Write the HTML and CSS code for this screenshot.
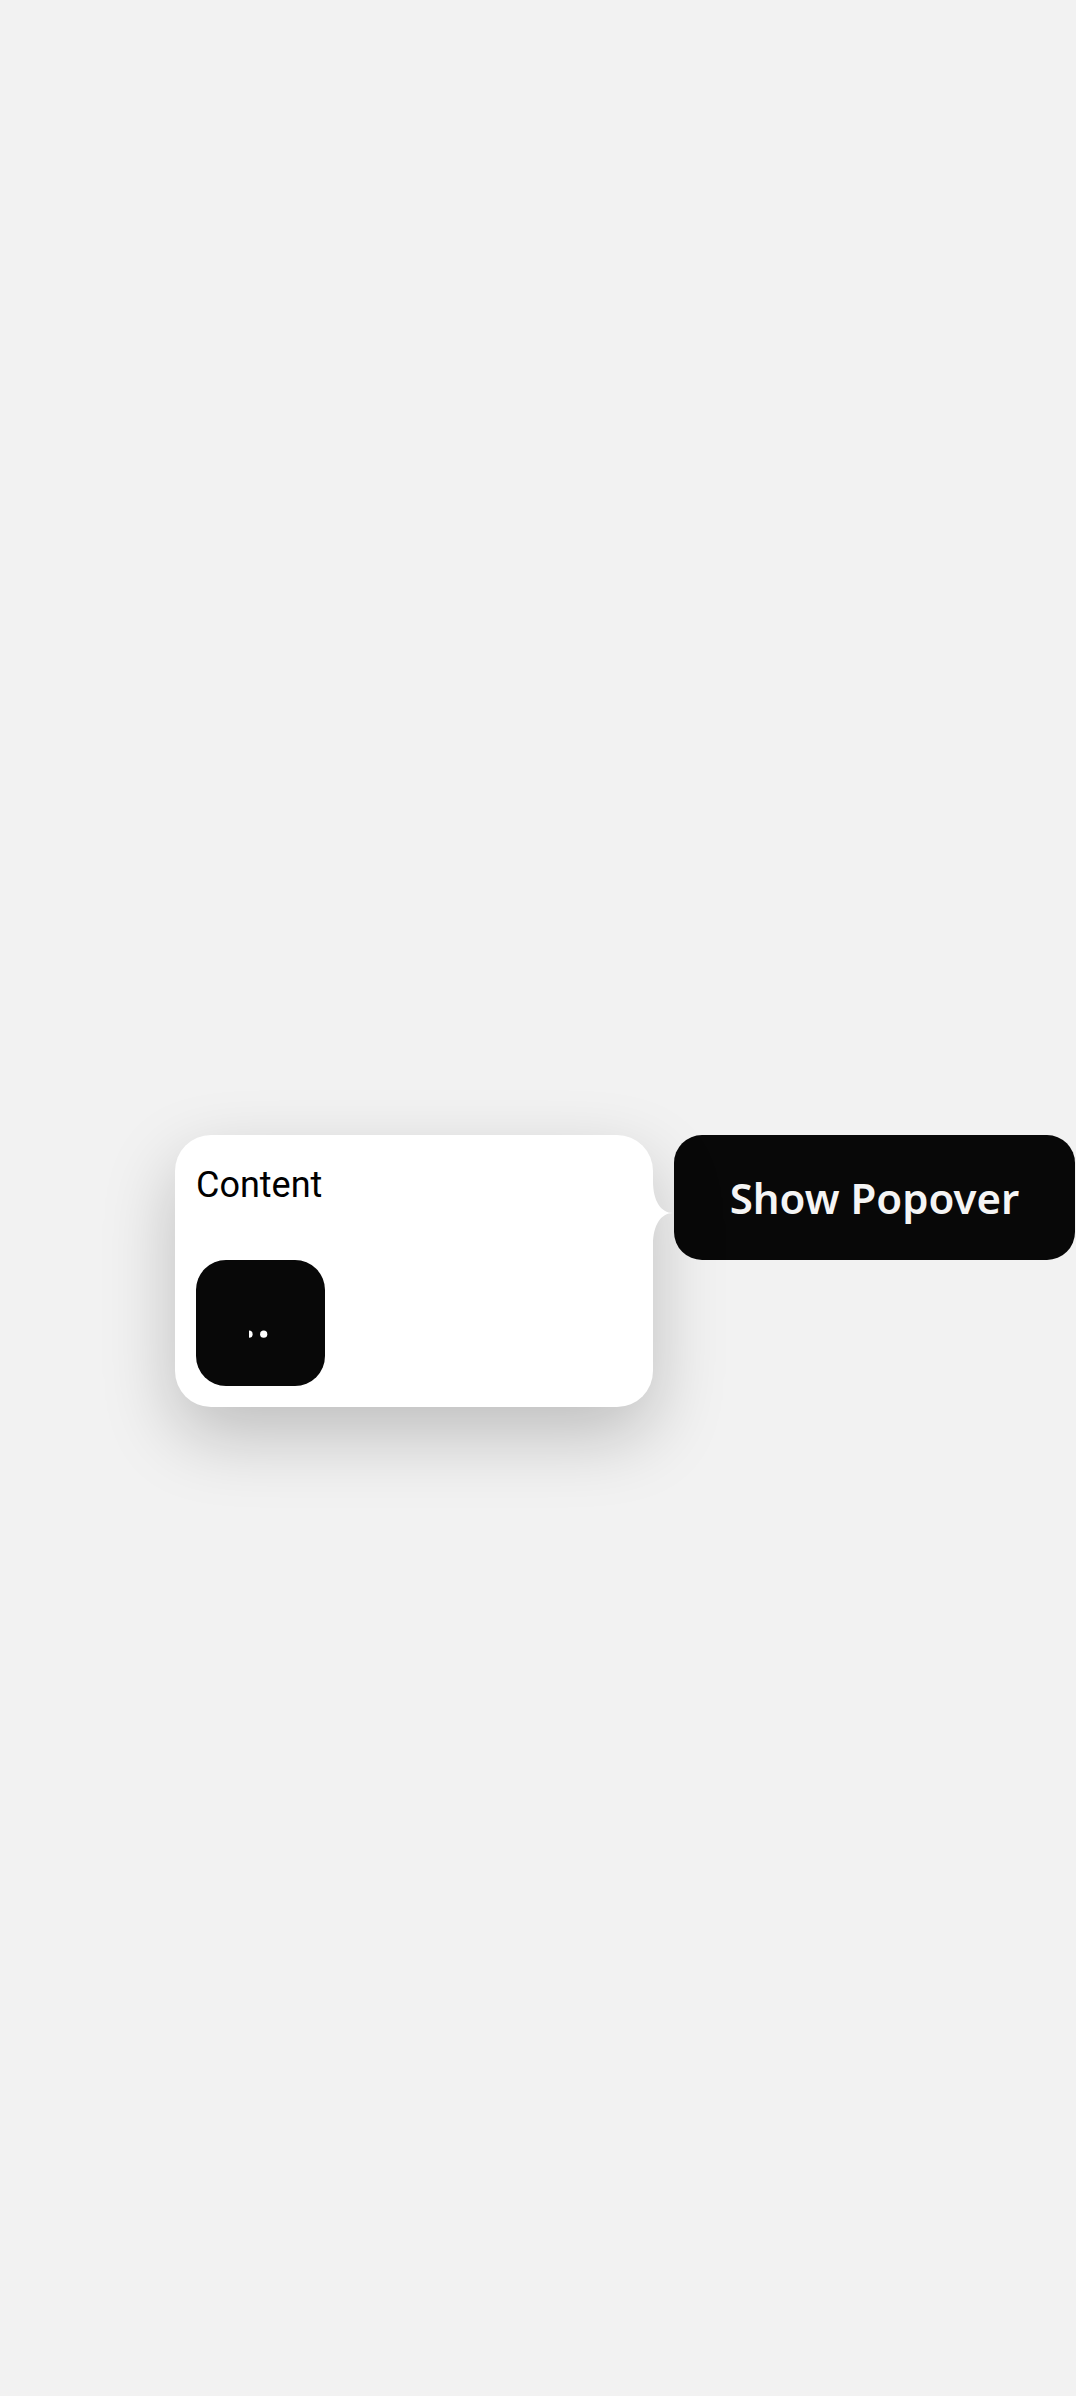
FILE: index.html
```html
<!DOCTYPE html>
<html lang="en">
<head>
<meta charset="utf-8">
<title>Popover</title>
<link rel="stylesheet" href="styles.css">
</head>
<body>
<div class="stage">
  <div class="popover">
    <div class="popover-text">Content</div>
    <div class="tile">
      <svg class="tile-dots" width="129" height="126" viewBox="0 0 129 126" aria-hidden="true">
        <path d="M53 70.6 A3.6 3.6 0 0 1 53 77.8 Z" fill="#ffffff"/>
        <circle cx="67.7" cy="74.2" r="3.6" fill="#ffffff"/>
      </svg>
    </div>
    <svg class="arrow" width="21" height="64" viewBox="0 0 21 64" aria-hidden="true">
      <path d="M0 0 C0 20 8 32 20 32 C8 32 0 44 0 64 Z" fill="#ffffff"/>
    </svg>
  </div>
  <button class="show-btn" type="button">Show Popover</button>
</div>
</body>
</html>
```

FILE: styles.css
```css
html, body {
  margin: 0;
  padding: 0;
}

body {
  background: #f2f2f2;
  width: 1076px;
  height: 2396px;
  overflow: hidden;
}

.stage {
  display: flex;
  align-items: flex-start;
  gap: 21px;
  padding: 1135px 0 0 175px;
}

.popover {
  position: relative;
  width: 478px;
  box-sizing: border-box;
  background: #ffffff;
  border-radius: 36px;
  padding: 29px 21px 21px 21px;
  box-shadow: 0 28px 72px rgba(0, 0, 0, 0.22);
}

.popover-text {
  font-family: Roboto, "Noto Sans", sans-serif;
  font-size: 36px;
  line-height: 42px;
  color: #000000;
  margin-bottom: 54px;
}

.tile {
  width: 129px;
  height: 126px;
  background: #080808;
  border-radius: 30px;
  overflow: hidden;
}

.tile-dots {
  display: block;
}

.arrow {
  position: absolute;
  left: 100%;
  top: 46px;
  display: block;
}

.show-btn {
  width: 401px;
  height: 125px;
  border: none;
  border-radius: 28px;
  background: #080808;
  color: #f5f5f5;
  font-family: "Noto Sans", "Open Sans", sans-serif;
  font-weight: 600;
  font-size: 42px;
  padding: 0;
  margin: 0;
  cursor: pointer;
}
```
